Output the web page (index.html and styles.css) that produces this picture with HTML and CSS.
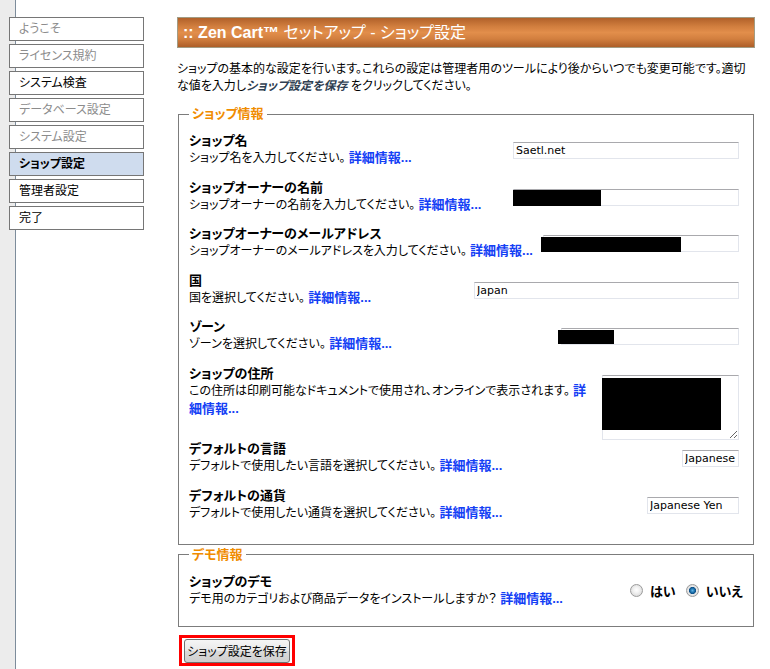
FILE: index.html
```html
<!DOCTYPE html>
<html lang="ja">
<head>
<meta charset="utf-8">
<title>Zen Cart セットアップ - ショップ設定</title>
<link rel="stylesheet" href="styles.css">
</head>
<body>
<div class="page">
  <ul class="nav">
    <li class="done">ようこそ</li>
    <li class="done">ライセンス規約</li>
    <li>システム検査</li>
    <li class="done">データベース設定</li>
    <li class="done">システム設定</li>
    <li class="current">ショップ設定</li>
    <li>管理者設定</li>
    <li>完了</li>
  </ul>
  <main class="main">
    <h1 class="title"><b>:: Zen Cart™</b> セットアップ - ショップ設定</h1>
    <p class="intro">ショップの基本的な設定を行います。これらの設定は管理者用のツールにより後からいつでも変更可能です。適切<br>な値を入力し<em>ショップ設定を保存</em> をクリックしてください。</p>

    <fieldset class="box box-shop">
      <legend>ショップ情報</legend>
      <div class="row">
        <div class="text"><div class="label">ショップ名</div><div class="desc">ショップ名を入力してください。 <a href="#">詳細情報...</a></div></div>
        <div class="field"><input class="tb w-shop" type="text" value="Saetl.net"></div>
      </div>
      <div class="row">
        <div class="text"><div class="label">ショップオーナーの名前</div><div class="desc">ショップオーナーの名前を入力してください。 <a href="#">詳細情報...</a></div></div>
        <div class="field"><input class="tb w-owner" type="text" value=""><span class="redact r-owner"></span></div>
      </div>
      <div class="row">
        <div class="text"><div class="label">ショップオーナーのメールアドレス</div><div class="desc">ショップオーナーのメールアドレスを入力してください。 <a href="#">詳細情報...</a></div></div>
        <div class="field"><input class="tb w-email" type="text" value=""><span class="redact r-email"></span></div>
      </div>
      <div class="row">
        <div class="text"><div class="label">国</div><div class="desc">国を選択してください。 <a href="#">詳細情報...</a></div></div>
        <div class="field"><input class="tb w-country" type="text" value="Japan"></div>
      </div>
      <div class="row">
        <div class="text"><div class="label">ゾーン</div><div class="desc">ゾーンを選択してください。 <a href="#">詳細情報...</a></div></div>
        <div class="field"><input class="tb w-zone" type="text" value=""><span class="redact r-zone"></span></div>
      </div>
      <div class="row row-addr">
        <div class="text"><div class="label">ショップの住所</div><div class="desc">この住所は印刷可能なドキュメントで使用され、オンラインで表示されます。 <a href="#">詳細情報...</a></div></div>
        <div class="field"><textarea class="ta"></textarea><span class="redact r-addr"></span></div>
      </div>
      <div class="row">
        <div class="text"><div class="label">デフォルトの言語</div><div class="desc">デフォルトで使用したい言語を選択してください。 <a href="#">詳細情報...</a></div></div>
        <div class="field"><input class="tb w-lang" type="text" value="Japanese"></div>
      </div>
      <div class="row">
        <div class="text"><div class="label">デフォルトの通貨</div><div class="desc">デフォルトで使用したい通貨を選択してください。 <a href="#">詳細情報...</a></div></div>
        <div class="field"><input class="tb w-cur" type="text" value="Japanese Yen"></div>
      </div>
    </fieldset>

    <fieldset class="box box-demo">
      <legend>デモ情報</legend>
      <div class="row row-demo">
        <div class="text"><div class="label">ショップのデモ</div><div class="desc">デモ用のカテゴリおよび商品データをインストールしますか？ <a href="#">詳細情報...</a></div></div>
        <div class="radios">
          <label class="opt"><input class="radio" type="radio" name="demo">はい</label>
          <label class="opt"><input class="radio" type="radio" name="demo" checked>いいえ</label>
        </div>
      </div>
    </fieldset>

    <div class="save-wrap"><button class="save" type="button">ショップ設定を保存</button></div>
  </main>
</div>
</body>
</html>
```

FILE: styles.css
```css
html, body {
  margin: 0;
  padding: 0;
  min-height: 100%;
}

body {
  background: linear-gradient(to right, #ececec 0, #ececec 15px, #7d8c9b 15px, #7d8c9b 16px, #ffffff 16px);
  font-family: "Liberation Sans", "Noto Sans CJK JP", sans-serif;
  font-size: 12px;
  color: #000;
  font-feature-settings: "palt" 1;
  min-height: 669px;
}

.page {
  display: flex;
  align-items: flex-start;
}

/* sidebar */
.nav {
  list-style: none;
  margin: 17px 0 0 9px;
  padding: 0;
  width: 135px;
  display: flex;
  flex-direction: column;
  gap: 3px;
}

.nav li {
  box-sizing: border-box;
  height: 24px;
  line-height: 22px;
  border: 1px solid #767676;
  background: #fff;
  padding-left: 9px;
  color: #000;
}

.nav li.done {
  color: #8c8c8c;
}

.nav li.current {
  background: #cfdcee;
  font-weight: bold;
}

/* main */
.main {
  margin-left: 33px;
  margin-top: 17px;
  width: 578px;
}

.title {
  margin: 0;
  box-sizing: border-box;
  height: 31px;
  border: 1px solid #a29c84;
  background: linear-gradient(#b1612a 0%, #d27f3f 30%, #e28e4b 50%, #d27f3f 72%, #ad5e28 100%);
  color: #fff;
  font-size: 16px;
  font-weight: normal;
  line-height: 29px;
  padding-left: 5px;
  white-space: nowrap;
}

.title b {
  font-weight: bold;
}

.intro {
  margin: 13px 0 0 0;
  line-height: 17px;
}

.intro em {
  font-style: italic;
  font-weight: bold;
  color: #2f3f52;
}

/* fieldsets */
.box {
  margin: 0 1px;
  border: 1px solid #7c7c7c;
  padding: 10px 14px 22px 10px;
  min-width: 0;
}

.box-shop {
  margin-top: 11px;
}

.box-demo {
  margin-top: 2px;
  padding-bottom: 18px;
}

.box legend {
  padding: 0 3px;
  color: #f08c00;
  font-weight: bold;
  font-size: 13px;
  line-height: 16px;
}

.row {
  display: flex;
  align-items: flex-start;
  justify-content: space-between;
  gap: 4px;
  margin-bottom: 11.5px;
}

.row:last-child {
  margin-bottom: 0;
}

.row-addr {
  margin-bottom: 0.5px;
}

.row-demo {
  align-items: center;
}

.text {
  flex: 1;
  min-width: 0;
}

.label {
  font-weight: bold;
  font-size: 13px;
  line-height: 17px;
}

.desc {
  line-height: 18px;
}

.desc a {
  color: #1440f5;
  font-weight: bold;
  font-size: 13px;
  text-decoration: none;
}

.field {
  position: relative;
  margin-top: 10px;
  flex: none;
  display: flex;
}

.tb {
  box-sizing: border-box;
  height: 17px;
  margin: 0;
  padding: 0 2px;
  border: 1px solid #e2e5ec;
  border-top-color: #a9a9ad;
  background: #fff;
  font-family: "DejaVu Sans", "Liberation Sans", sans-serif;
  font-size: 11px;
  color: #000;
  outline: none;
}

.w-shop { width: 226px; }
.w-owner { width: 226px; }
.w-email { width: 196px; }
.w-country { width: 265px; }
.w-zone { width: 178px; }
.w-lang { width: 57px; }
.w-cur { width: 92px; }

.ta {
  box-sizing: border-box;
  width: 137px;
  height: 65px;
  margin: 0;
  border: 1px solid #e2e5ec;
  border-top-color: #a9a9ad;
  background: #fff;
  resize: both;
  font-family: "DejaVu Sans", sans-serif;
  font-size: 11px;
}

/* redaction boxes overlaying the values */
.redact {
  position: absolute;
  background: #000;
}

.r-owner { left: 0; top: 1px; width: 88px; height: 16px; }
.r-email { left: -2px; top: 2px; width: 140px; height: 15px; }
.r-zone { left: -3px; top: 2px; width: 56px; height: 14px; }
.r-addr { left: 0; top: 3px; width: 119px; height: 52px; }

/* radios */
.radios {
  display: flex;
  align-items: center;
  gap: 10px;
  margin-right: -4px;
  flex: none;
}

.opt {
  display: flex;
  align-items: center;
  gap: 7px;
  font-weight: bold;
  font-size: 13px;
}

.radio {
  appearance: none;
  -webkit-appearance: none;
  box-sizing: border-box;
  width: 13px;
  height: 13px;
  margin: 0;
  border-radius: 50%;
  border: 1px solid #9b9b9b;
  background: radial-gradient(circle at 50% 45%, #ffffff 0, #f2f2f2 35%, #cfcfcf 100%);
}

.radio:checked {
  background: radial-gradient(circle at 50% 50%, #5fb3e6 0, #1b6ea8 28%, #0d4e86 42%, #e9e9e9 50%, #d0d0d0 100%);
}

/* save button */
.save-wrap {
  display: inline-block;
  margin: 8px 0 0 2px;
  border: 3px solid #ff0000;
  padding: 1px 2px 0 2px;
}

.save {
  box-sizing: border-box;
  height: 24px;
  width: 106px;
  margin: 0;
  padding: 0;
  border: 1px solid #707070;
  border-radius: 3px;
  background: linear-gradient(#f5f5f5, #e8e8e8 50%, #dadada 51%, #cfcfcf);
  font-family: "Liberation Sans", "Noto Sans CJK JP", sans-serif;
  font-feature-settings: "palt" 1;
  font-size: 12px;
  color: #000;
}
```
